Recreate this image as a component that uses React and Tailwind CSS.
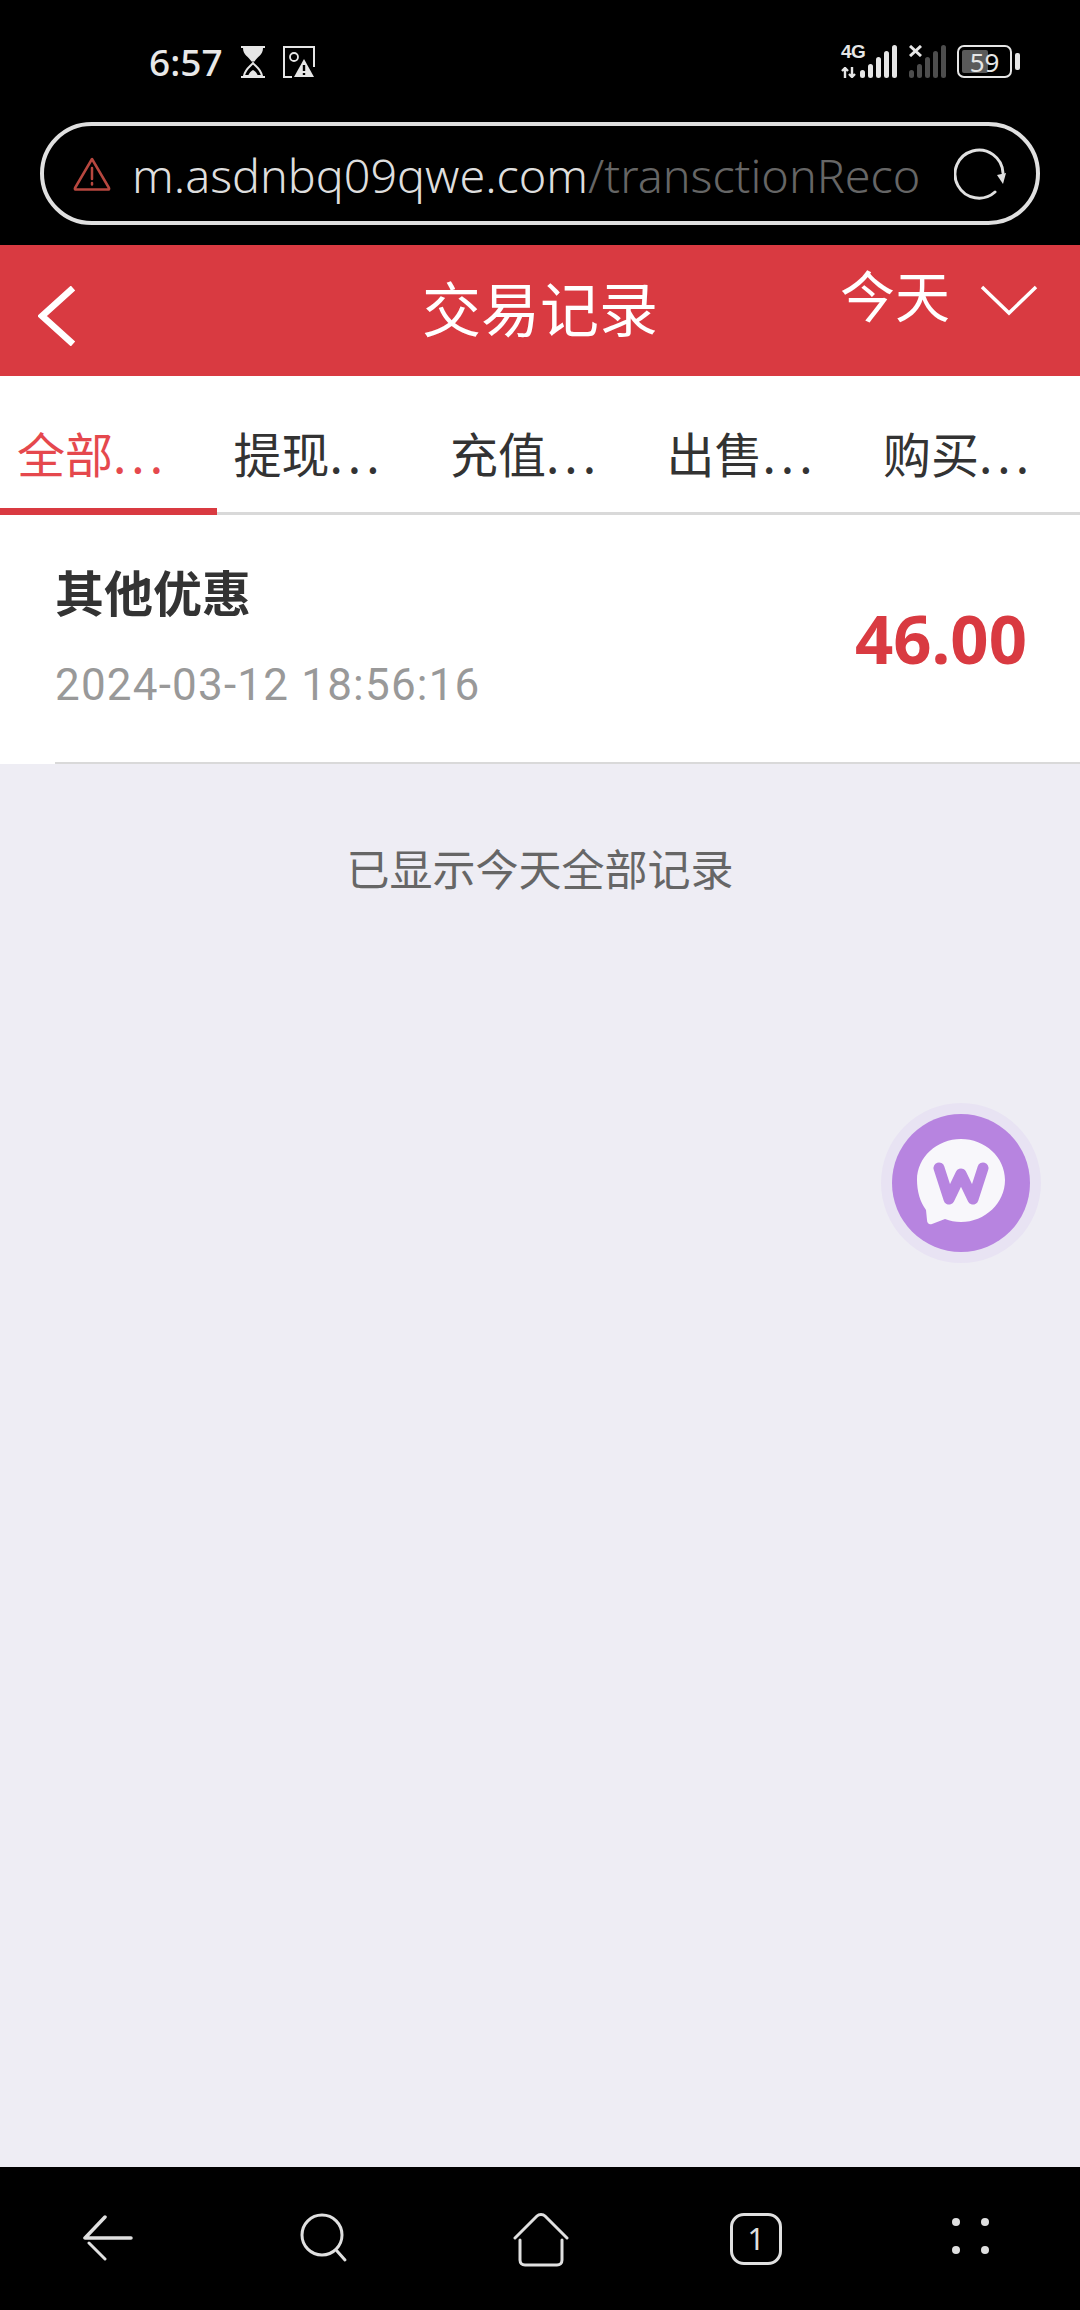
const cjk = { fontFamily: '"Noto Sans CJK SC", "Noto Sans", sans-serif' }

const tabs = ['全部', '提现', '充值', '出售', '购买']

function Bars({ dim }) {
  const heights = [8, 14, 21, 27, 33]
  return (
    <div className="flex items-end gap-[3px] h-[33px]">
      {heights.map((h, i) => (
        <span
          key={i}
          className={`w-[5px] rounded-full ${dim ? 'bg-[#4d4d4d]' : 'bg-[#e6e6e6]'}`}
          style={{ height: h }}
        />
      ))}
    </div>
  )
}

function StatusBar() {
  return (
    <div className="h-[122px] pt-[45px] pl-[149px] pr-[60px] flex items-start justify-between">
      <div className="flex items-center h-[34px] text-[#e8e8e8]">
        <span className="text-[37px] leading-[32px] font-medium" style={{ fontFamily: '"Noto Sans", sans-serif' }}>6:57</span>
        <svg className="ml-[17px]" width="26" height="32" viewBox="0 0 26 32">
          <path d="M1 1h24M1 31h24" stroke="#e6e6e6" strokeWidth="2" />
          <path d="M3 2h20c0 7-6 9-8.500 13.500h-3C9 11 3 9 3 2z" fill="#e6e6e6" />
          <path d="M13 17c2 3 8 6 9 13H4c1-7 7-10 9-13z" fill="none" stroke="#e6e6e6" strokeWidth="2" />
          <path d="M8 30c1-3 3-5 5-6 2 1 4 3 5 6z" fill="#e6e6e6" />
        </svg>
        <svg className="ml-[17px]" width="32" height="32" viewBox="0 0 32 32">
          <path d="M9 31H1V1h30v20" fill="none" stroke="#e6e6e6" strokeWidth="2" />
          <circle cx="11" cy="11" r="4" fill="none" stroke="#e6e6e6" strokeWidth="1.800" />
          <path d="M21 13l10 18H11z" fill="#e6e6e6" />
          <path d="M21 19v6M21 27v2" stroke="#000" strokeWidth="2.400" />
        </svg>
      </div>
      <div className="flex items-start text-[#e6e6e6]">
        <div className="flex flex-col w-[19px] h-[33px] justify-between">
          <span className="text-[19px] leading-[14px] font-bold tracking-[-0.5px]" style={{ fontFamily: '"Liberation Sans Narrow", "Liberation Sans", sans-serif' }}>4G</span>
          <svg width="16" height="11" viewBox="0 0 16 11" fill="none" stroke="#e6e6e6" strokeWidth="2.400">
            <path d="M4 11V1M1 4l3-3 3 3" />
            <path d="M11 0v10M8 7l3 3 3-3" />
          </svg>
        </div>
        <Bars />
        <div className="ml-[12px] relative">
          <Bars dim />
          <svg className="absolute left-0 top-0" width="13" height="12" viewBox="0 0 13 12" stroke="#e6e6e6" strokeWidth="3">
            <path d="M1 1l11 10M12 1L1 11" />
          </svg>
        </div>
        <div className="ml-[11px] flex items-center">
          <div className="w-[55px] h-[33px] rounded-[7px] border-[2px] border-[#e6e6e6] p-[3px] relative">
            <div className="w-[26px] h-full bg-[#5a5a5a] rounded-[2px]" />
            <span className="absolute inset-0 flex items-center justify-center text-[26px] leading-none" style={{ fontFamily: '"Noto Sans", sans-serif' }}>59</span>
          </div>
          <span className="ml-[3px] w-[5px] h-[17px] rounded-[2px] bg-[#e6e6e6]" />
        </div>
      </div>
    </div>
  )
}

function UrlBar() {
  return (
    <div className="h-[123px] pl-[40px] pr-[40px]">
      <div className="h-[103px] rounded-full border-[4px] border-[#e0e0e0] flex items-center pl-[29px] pr-[28px]">
        <svg className="shrink-0" width="38" height="34" viewBox="0 0 38 34" fill="none" stroke="#b8473f" strokeWidth="2.500" strokeLinejoin="round" strokeLinecap="round">
          <path d="M19 2L2 31c-.5 1 0 1.500 1 1.500h32c1 0 1.500-.5 1-1.500z" />
          <path d="M19 11v11M19 26v1.500" />
        </svg>
        <div className="ml-[21px] w-[787px] whitespace-nowrap text-[46.700px] leading-[60px] pt-[3px] font-light" style={{ fontFamily: '"Noto Sans", sans-serif' }}>
          <span className="text-[#dedede]">m.asdnbq09qwe.com</span>
          <span className="text-[#666666]">/transctionReco</span>
        </div>
        <svg className="ml-[35px] shrink-0" width="52" height="52" viewBox="0 0 52 52" fill="none" stroke="#e0e0e0" strokeWidth="3" strokeLinecap="round">
          <path d="M41 44A24 24 0 1 1 49 25" />
          <path d="M43 27l6 9 3-11z" fill="#e0e0e0" stroke="none" />
        </svg>
      </div>
    </div>
  )
}

function Header() {
  return (
    <div className="h-[131px] bg-[#d93a41] flex items-start text-white relative" style={cjk}>
      <div className="w-[240px] pl-[38px] pt-[41px]">
        <svg width="38" height="60" viewBox="0 0 38 60" fill="none" stroke="#fff" strokeWidth="6.500">
          <path d="M35 2L4 30l31 28" />
        </svg>
      </div>
      <div className="flex-1 text-center text-[59px] leading-[70px] pt-[27px]">交易记录</div>
      <div className="w-[240px] flex items-start pt-[13px]">
        <span className="text-[55px] leading-[70px]">今天</span>
        <svg className="ml-[30px] mt-[26px]" width="58" height="32" viewBox="0 0 58 32" fill="none" stroke="#fff" strokeWidth="3.500">
          <path d="M2 3l27 26L56 3" />
        </svg>
      </div>
    </div>
  )
}

function Tabs() {
  return (
    <div className="h-[139px] bg-white flex border-b-[3px] border-[#d9d9d9]" style={cjk}>
      {tabs.map((tab, i) => (
        <div
          key={tab}
          className={`w-[216.500px] h-[139px] shrink-0 pl-[17px] pt-[41px] text-[48px] leading-[70px] ${
            i === 0 ? 'text-[#e5484d] border-b-[7px] border-[#d93a41]' : 'text-[#333333]'
          }`}
        >
          {tab}<span className="tracking-[5px]">...</span>
        </div>
      ))}
    </div>
  )
}

function Record() {
  return (
    <div className="bg-white pl-[55px] h-[249px]">
      <div className="h-full border-b-[2px] border-[#d9d9d9] pr-[53px] flex items-center justify-between">
        <div className="pb-[9px]">
          <div className="text-[49px] leading-[66px] font-bold text-[#333333]" style={cjk}>其他优惠</div>
          <div className="mt-[36px] text-[44px] leading-[50px] tracking-[1.200px] text-[#999999]" style={{ fontFamily: 'Roboto, sans-serif' }}>2024-03-12 18:56:16</div>
        </div>
        <div className="text-[67px] leading-[80px] font-bold text-[#d93a41] pb-[1px]" style={{ fontFamily: '"Noto Sans", sans-serif' }}>46.00</div>
      </div>
    </div>
  )
}

function ChatButton() {
  return (
    <div className="absolute left-[881px] top-[1103px] w-[160px] h-[160px] rounded-full bg-[#e8e3f3] flex items-center justify-center">
      <div className="w-[138px] h-[138px] rounded-full bg-[#b784e0] flex items-center justify-center">
        <svg width="90" height="90" viewBox="0 0 90 90">
          <path d="M45 1c24 0 44 18 44 41S69 84 45 84c-6 0-11-1-16-3l-13 5c-3 1-5-1-5-4l-1-10C4 64 1 53 1 42 1 19 21 1 45 1z" fill="#f8f7fb" />
          <path d="M23 30l10 31 12-25 12 25 10-31" fill="none" stroke="#b784e0" strokeWidth="11" strokeLinecap="round" strokeLinejoin="round" />
        </svg>
      </div>
    </div>
  )
}

function BottomNav() {
  const stroke = { fill: 'none', stroke: '#e0e0e0', strokeWidth: 3, strokeLinecap: 'round', strokeLinejoin: 'round' }
  return (
    <div className="h-[143px] bg-black flex items-start pt-[46px] pl-[83px]">
      <svg width="52" height="48" viewBox="0 0 52 48" {...stroke}>
        <path d="M22 4L2 25h46" strokeWidth="3.500" />
        <path d="M6 30l16 16" />
      </svg>
      <svg className="ml-[165px]" width="48" height="50" viewBox="0 0 48 50" {...stroke}>
        <circle cx="22" cy="22" r="20" />
        <path d="M37 38l8 9" />
      </svg>
      <svg className="ml-[165px]" width="56" height="54" viewBox="0 0 56 54" {...stroke}>
        <path d="M2 25L24 3c2-2 6-2 8 0l22 22" />
        <path d="M7 27v20c0 3 2 5 5 5h32c3 0 5-2 5-5V27" />
      </svg>
      <div className="ml-[161px] w-[52px] h-[52px] rounded-[14px] border-[3px] border-[#e0e0e0] flex items-center justify-center text-[#e0e0e0] text-[30px] leading-none" style={{ fontFamily: '"Noto Sans", sans-serif' }}>
        1
      </div>
      <div className="ml-[170px] mt-[5px] grid grid-cols-2 gap-x-[21px] gap-y-[20px]">
        <span className="w-[8px] h-[8px] rounded-full bg-[#e0e0e0]" />
        <span className="w-[8px] h-[8px] rounded-full bg-[#e0e0e0]" />
        <span className="w-[8px] h-[8px] rounded-full bg-[#e0e0e0]" />
        <span className="w-[8px] h-[8px] rounded-full bg-[#e0e0e0]" />
      </div>
    </div>
  )
}

export default function App() {
  return (
    <div className="w-[1080px] h-[2310px] bg-black flex flex-col overflow-hidden relative">
      <StatusBar />
      <UrlBar />
      <Header />
      <Tabs />
      <Record />
      <div className="flex-1 bg-[#eeedf4]">
        <p className="text-center text-[43px] leading-[50px] pt-[78px] text-[#666666]" style={cjk}>已显示今天全部记录</p>
      </div>
      <ChatButton />
      <BottomNav />
    </div>
  )
}
